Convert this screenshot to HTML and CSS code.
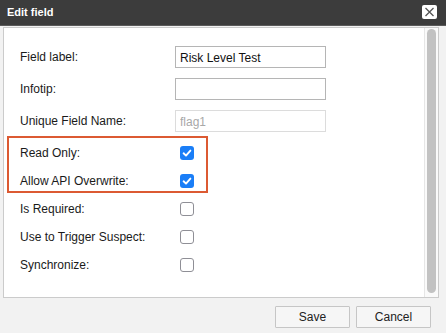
FILE: index.html
```html
<!DOCTYPE html>
<html>
<head>
<meta charset="utf-8">
<link rel="stylesheet" href="styles.css">
</head>
<body>
<div class="dialog">
  <div class="titlebar">
    <span class="title">Edit field</span>
    <span class="close"><svg width="11" height="10" viewBox="0 0 11 10"><path d="M1.5 1 L9.5 9 M9.5 1 L1.5 9" stroke="#555" stroke-width="1.3" fill="none"/></svg></span>
  </div>
  <div class="body">
    <div class="panel">
      <div class="content">
        <div class="row">
          <label class="label">Field label:</label>
          <input class="text" type="text" value="Risk Level Test">
        </div>
        <div class="row">
          <label class="label">Infotip:</label>
          <input class="text" type="text" value="">
        </div>
        <div class="row">
          <label class="label">Unique Field Name:</label>
          <input class="text disabled" type="text" value="flag1" disabled>
        </div>
        <div class="group">
          <div class="crow">
            <span class="label">Read Only:</span>
            <span class="cb checked"><svg width="14" height="14" viewBox="0 0 14 14"><path d="M3.6 7.3 L6 9.6 L10.4 4.6" stroke="#fff" stroke-width="1.9" fill="none" stroke-linecap="round" stroke-linejoin="round"/></svg></span>
          </div>
          <div class="crow">
            <span class="label">Allow API Overwrite:</span>
            <span class="cb checked"><svg width="14" height="14" viewBox="0 0 14 14"><path d="M3.6 7.3 L6 9.6 L10.4 4.6" stroke="#fff" stroke-width="1.9" fill="none" stroke-linecap="round" stroke-linejoin="round"/></svg></span>
          </div>
          <div class="highlight"></div>
        </div>
        <div class="crow">
          <span class="label">Is Required:</span>
          <span class="cb"></span>
        </div>
        <div class="crow">
          <span class="label">Use to Trigger Suspect:</span>
          <span class="cb"></span>
        </div>
        <div class="crow">
          <span class="label">Synchronize:</span>
          <span class="cb"></span>
        </div>
      </div>
      <div class="scrollbar"><div class="thumb"></div></div>
    </div>
  </div>
  <div class="footer">
    <button class="btn">Save</button>
    <button class="btn">Cancel</button>
  </div>
</div>
</body>
</html>
```

FILE: styles.css
```css
html, body {
  margin: 0;
  padding: 0;
}
body {
  background: #f2f2f2;
  font-family: "Liberation Sans", Arial, sans-serif;
  font-size: 12px;
  color: #222;
  width: 446px;
  height: 333px;
  overflow: hidden;
}
.titlebar {
  height: 25px;
  background: #3c3c3c;
  display: flex;
  align-items: center;
  justify-content: space-between;
  padding: 0 9px 0 7px;
  border-bottom: 1px solid #5a5a5a;
}
.title {
  color: #fff;
  font-weight: bold;
  font-size: 11px;
  margin-top: -2px;
}
.close {
  width: 15px;
  height: 14px;
  background: #fff;
  border-radius: 2px;
  display: flex;
  align-items: center;
  justify-content: center;
  margin-top: -1px;
}
.body {
  padding: 1px 7px 0 3px;
}
.panel {
  height: 269px;
  border: 1px solid #cbcbcb;
  background: #fff;
  display: flex;
}
.content {
  flex: 1;
  padding: 13px 0 0 16px;
}
.row {
  height: 32px;
  display: flex;
  align-items: center;
}
.row .label {
  width: 155px;
}
.crow {
  height: 28px;
  display: flex;
  align-items: center;
}
.label {
  width: 160px;
  flex: none;
  color: #1a1a1a;
}
.text {
  box-sizing: border-box;
  width: 151px;
  height: 22px;
  border: 1px solid #b5b5b5;
  margin: 0;
  padding: 1px 4px 0;
  font-family: "Liberation Sans", Arial, sans-serif;
  font-size: 12px;
  color: #111;
  background: #fff;
  outline: none;
}
.text.disabled {
  border-color: #dcdcdc;
  color: #a8a8a8;
}
.group {
  position: relative;
  margin-top: 2px;
}
.highlight {
  position: absolute;
  left: -13px;
  top: -3px;
  width: 197px;
  height: 53px;
  border: 2px solid #dc5a32;
  pointer-events: none;
}
.cb {
  box-sizing: border-box;
  width: 14px;
  height: 14px;
  border: 1px solid #8f8f96;
  border-radius: 3px;
  background: #fff;
  display: block;
  flex: none;
}
.cb.checked {
  border: none;
  background: #1a7ef7;
}
.cb svg {
  display: block;
}
.scrollbar {
  width: 14px;
  border-left: 1px solid #e6e6e6;
  background: #fafafa;
  padding: 1px 0;
  box-sizing: border-box;
  display: flex;
  justify-content: center;
}
.thumb {
  width: 9px;
  height: 264px;
  border-radius: 5px;
  background: #c2c2c2;
}
.footer {
  display: flex;
  justify-content: flex-end;
  gap: 6px;
  padding: 8px 15px 0 0;
}
.btn {
  box-sizing: border-box;
  width: 75px;
  height: 22px;
  border: 1px solid #c6c6c6;
  background: #f6f6f6;
  border-radius: 1px;
  font-family: "Liberation Sans", Arial, sans-serif;
  font-size: 12px;
  color: #222;
  padding: 0;
  margin: 0;
}
```
